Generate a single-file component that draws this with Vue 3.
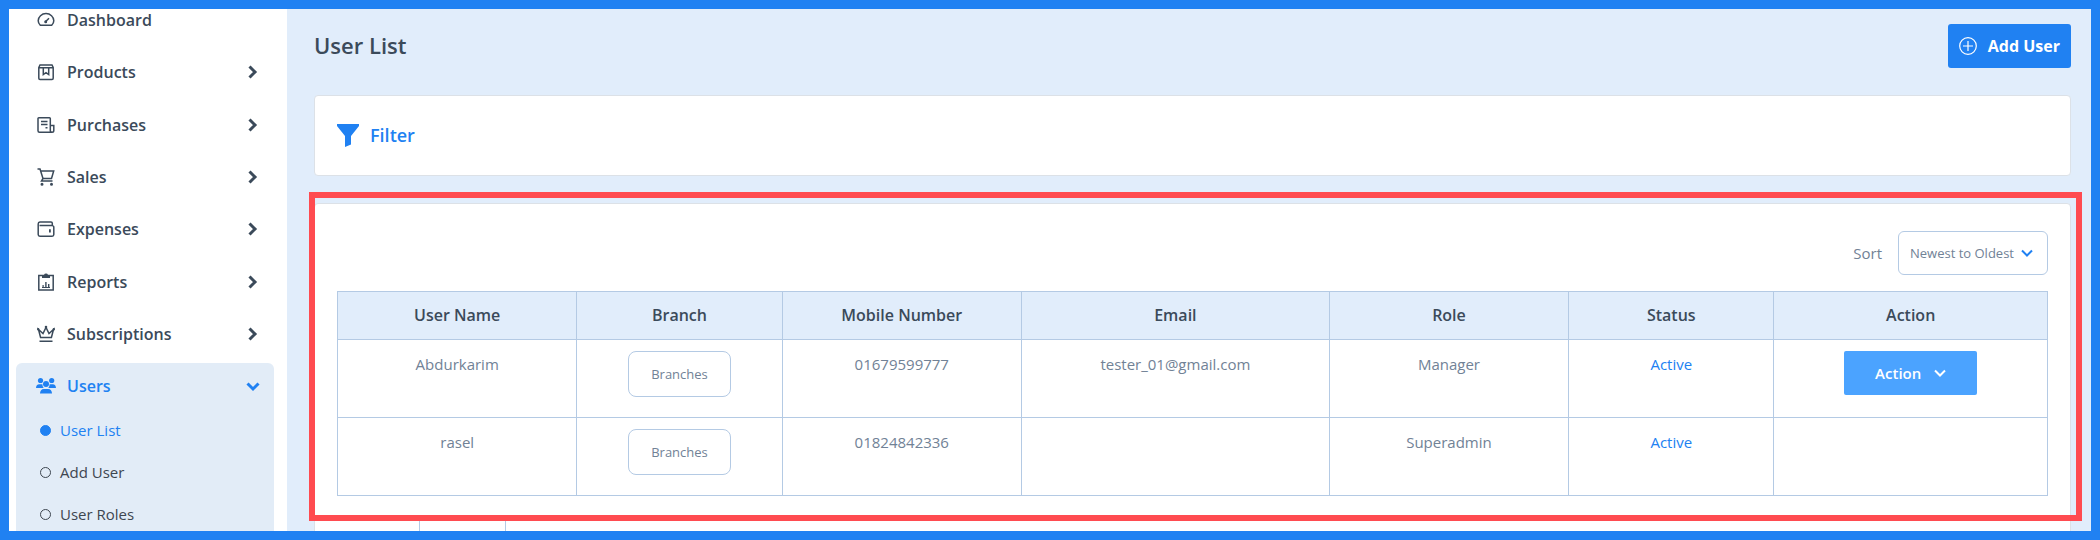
<template>
  <div class="app">
    <aside class="sidebar">
      <nav>
        <ul class="menu">
          <li v-for="item in menu" :key="item.label">
            <a href="#" class="menu-link">
              <svg class="menu-icon" viewBox="0 0 18 18">
                <path :d="item.icon" />
                <path v-if="item.solid" class="solid" :d="item.solid" />
              </svg>
              <span class="menu-label">{{ item.label }}</span>
              <svg v-if="item.children" class="chevron" viewBox="0 0 14 14">
                <path d="M4.5 1.5L10 7L4.5 12.5" />
              </svg>
            </a>
          </li>
        </ul>

        <div class="group">
          <a href="#" class="menu-link active" @click.prevent="usersOpen = !usersOpen">
            <svg class="users-icon" viewBox="0 0 20 18">
              <circle cx="4.5" cy="3.5" r="2.6" />
              <circle cx="15.7" cy="3.5" r="2.6" />
              <circle cx="10" cy="7" r="3" />
              <path d="M0 11c0-2.4 1.3-3.8 3.2-3.8h2.3c.4 0 .7.1 1 .3-.1 1.3.3 2.5 1.3 3.5z" />
              <path d="M20 11c0-2.4-1.3-3.8-3.2-3.8h-2.3c-.4 0-.7.1-1 .3.1 1.3-.3 2.5-1.3 3.5z" />
              <path d="M4 16.5c0-2.7 1.6-4.5 3.8-4.5h4.4c2.2 0 3.8 1.8 3.8 4.5z" />
            </svg>
            <span class="menu-label">Users</span>
            <svg class="chevron" viewBox="0 0 14 14">
              <path d="M1.5 4.5L7 10L12.5 4.5" />
            </svg>
          </a>
          <ul v-if="usersOpen" class="submenu">
            <li v-for="page in userPages" :key="page">
              <a href="#" class="sub-link" :class="{ current: page === currentPage }">
                <span class="dot"></span>{{ page }}
              </a>
            </li>
          </ul>
        </div>
      </nav>
    </aside>

    <main class="content">
      <header class="page-head">
        <h1>User List</h1>
        <button class="add-btn" type="button">
          <svg viewBox="0 0 18 18">
            <circle cx="9" cy="9" r="8.3" />
            <path d="M9 4v10M4 9h10" />
          </svg>
          Add User
        </button>
      </header>

      <section class="card filter">
        <a href="#" class="filter-link">
          <svg viewBox="0 0 22 23">
            <path d="M0 0H22V2L14 12V20.5L8 23V12L0 2Z" />
          </svg>
          Filter
        </a>
      </section>

      <section class="card list">
        <div class="highlighted">
          <div class="toolbar">
            <label for="sort">Sort</label>
            <div class="select-box">
              <select id="sort" v-model="sort">
                <option v-for="option in sortOptions" :key="option">{{ option }}</option>
              </select>
              <svg viewBox="0 0 12 12"><path d="M1 3.5L6 8.5L11 3.5" /></svg>
            </div>
          </div>

          <table>
            <colgroup>
              <col class="w14" /><col class="w12" /><col class="w14" /><col class="w18" />
              <col class="w14" /><col class="w12" /><col class="w16" />
            </colgroup>
            <thead>
              <tr>
                <th v-for="column in columns" :key="column">{{ column }}</th>
              </tr>
            </thead>
            <tbody>
              <tr v-for="user in users" :key="user.name">
                <td>{{ user.name }}</td>
                <td><button class="branch-btn" type="button">Branches</button></td>
                <td>{{ user.mobile }}</td>
                <td>{{ user.email }}</td>
                <td>{{ user.role }}</td>
                <td class="status">{{ user.status }}</td>
                <td>
                  <button v-if="user.editable" class="action-btn" type="button">
                    Action
                    <svg viewBox="0 0 12 12"><path d="M1 3.5L6 8.5L11 3.5" /></svg>
                  </button>
                </td>
              </tr>
            </tbody>
          </table>
        </div>
        <div class="pager"><span class="page"></span></div>
      </section>
    </main>
  </div>
</template>

<script setup>
import { ref } from "vue";

const usersOpen = ref(true);
const currentPage = ref("User List");
const userPages = ["User List", "Add User", "User Roles"];

const sortOptions = ["Newest to Oldest", "Oldest to Newest"];
const sort = ref("Newest to Oldest");

const menu = [
  {
    label: "Dashboard",
    icon: "M3.3 14.3C2 13 1.2 11.5 1.2 9.8a7.8 7.2 0 0 1 15.6 0c0 1.7-.8 3.2-2.1 4.5zM8.7 10.5L12 7.2",
    solid: "M7.2 10.8a1.5 1.5 0 1 1 3 0a1.5 1.5 0 1 1-3 0",
  },
  {
    label: "Products",
    icon: "M1.8 4.5L3 2h12l1.2 2.5V15.3a1.2 1.2 0 0 1-1.2 1.2H3A1.2 1.2 0 0 1 1.8 15.3zM1.8 4.7h14.4M6.3 5v6.5L9 9.7l2.7 1.8V5",
    children: true,
  },
  {
    label: "Purchases",
    icon: "M15 16.3H2.5A1.5 1.5 0 0 1 1 14.8V2.5A.8.8 0 0 1 1.8 1.7H12.5a.8.8 0 0 1 .8.8V14.5a1.7 1.7 0 0 0 3.5 0V9.5h-3.5M4 5.5h6.5M4 8.5h6.5M8.5 11.8h2",
    children: true,
  },
  {
    label: "Sales",
    icon: "M.5 1H3l3 9.5h8.5l2.2-7.5H3.7M6 10.5l-1.5 2.5H15.5",
    solid: "M3.5 16.2a1.5 1.5 0 1 1 3 0a1.5 1.5 0 1 1-3 0M13 16.2a1.5 1.5 0 1 1 3 0a1.5 1.5 0 1 1-3 0",
    children: true,
  },
  {
    label: "Expenses",
    icon: "M15.3 5.5V3.3A1.3 1.3 0 0 0 14 2H3A2 2 0 0 0 1.2 4V14.5A1.7 1.7 0 0 0 2.9 16.2H15.1A1.7 1.7 0 0 0 16.8 14.5V7.2A1.7 1.7 0 0 0 15.1 5.5H2.5",
    solid: "M12 9.3h1.8v3.2H12z",
    children: true,
  },
  {
    label: "Reports",
    icon: "M1.8 2.5H16.2V17H1.8z",
    solid: "M5 2h2a2.1 2.1 0 0 1 4 0h2v3H5zM5.5 12h1.2v2H5.5zM8.2 9h1.4v5H8.2zM11 11h1.4v3H11zM5 14h8v1H5z",
    children: true,
  },
  {
    label: "Subscriptions",
    icon: "M3.6 12.5L1.5 4.5L6 8.5L9 2.5L12 8.5L16.5 4.5L14.4 12.5zM2.5 16.3H15.5",
    solid: "M0 4.3a1.2 1.2 0 1 1 2.4 0a1.2 1.2 0 1 1-2.4 0M7.7 2a1.3 1.3 0 1 1 2.6 0a1.3 1.3 0 1 1-2.6 0M15.6 4.3a1.2 1.2 0 1 1 2.4 0a1.2 1.2 0 1 1-2.4 0",
    children: true,
  },
];

const columns = ["User Name", "Branch", "Mobile Number", "Email", "Role", "Status", "Action"];

const users = [
  {
    name: "Abdurkarim",
    mobile: "01679599777",
    email: "tester_01@gmail.com",
    role: "Manager",
    status: "Active",
    editable: true,
  },
  {
    name: "rasel",
    mobile: "01824842336",
    email: "",
    role: "Superadmin",
    status: "Active",
    editable: false,
  },
];
</script>

<style>
body {
  margin: 0;
}
</style>

<style scoped>
* {
  box-sizing: border-box;
}

.app {
  display: flex;
  height: 100vh;
  overflow: hidden;
  border: 9px solid #2081f2;
  background: #e1edfb;
  color: #3b4a5a;
  font-family: "Open Sans", "Noto Sans", sans-serif;
}

a {
  color: inherit;
  text-decoration: none;
}

ul {
  list-style: none;
  margin: 0;
  padding: 0;
}

button,
select {
  font-family: inherit;
  cursor: pointer;
}

svg {
  flex: none;
  fill: none;
  stroke: currentColor;
}

.sidebar {
  flex: none;
  width: 278px;
  background: #fff;
}

.menu {
  display: flex;
  flex-direction: column;
  justify-content: space-between;
  height: 336px;
  padding: 0 14px 0 7px;
}

.menu-link {
  display: flex;
  align-items: center;
  padding: 0 14px 0 21px;
  font-size: 16px;
  font-weight: 600;
  line-height: 22px;
}

.menu-icon {
  width: 18px;
  height: 18px;
  margin-right: 12px;
  stroke-width: 1.5;
}

.solid {
  fill: currentColor;
  stroke: none;
}

.menu-label {
  flex: 1;
}

.chevron {
  width: 14px;
  height: 14px;
  stroke-width: 3;
}

.group {
  margin: 18px 13px 0 7px;
  padding-top: 12px;
  height: 240px;
  border-radius: 6px;
  background: #e2ecf7;
}

.active {
  padding: 0 14px 0 20px;
  color: #2081f2;
}

.users-icon {
  width: 20px;
  height: 18px;
  margin-right: 11px;
  fill: currentColor;
  stroke: none;
}

.submenu {
  padding: 12px 0 0 24px;
}

.sub-link {
  display: flex;
  align-items: center;
  gap: 9px;
  font-size: 15px;
  line-height: 42px;
  color: #3d4650;
}

.dot {
  width: 11px;
  height: 11px;
  border: 1px solid currentColor;
  border-radius: 50%;
}

.current {
  color: #2081f2;
}

.current .dot {
  background: currentColor;
}

.content {
  flex: 1;
  min-width: 0;
  padding: 15px 20px 0 27px;
}

.page-head {
  display: flex;
  align-items: center;
  justify-content: space-between;
  margin-bottom: 27px;
}

h1 {
  margin: 0;
  padding-bottom: 2px;
  font-size: 22px;
  font-weight: 600;
  line-height: 32px;
}

.add-btn {
  display: flex;
  align-items: center;
  gap: 11px;
  height: 44px;
  padding: 0 11px;
  border: none;
  border-radius: 3px;
  background: #2081f2;
  color: #fff;
  font-size: 16px;
  font-weight: 700;
}

.add-btn svg {
  width: 18px;
  height: 18px;
  stroke-width: 1.2;
}

.card {
  border: 1px solid #dce1e7;
  border-radius: 4px;
  background: #fff;
}

.filter {
  padding: 23px 22px;
  margin-bottom: 27px;
}

.filter-link {
  display: inline-flex;
  align-items: center;
  gap: 11px;
  color: #2081f2;
  font-size: 18px;
  font-weight: 600;
  line-height: 32px;
}

.filter-link svg {
  width: 22px;
  height: 23px;
  fill: currentColor;
  stroke: none;
}

.list {
  padding-bottom: 60px;
}

.highlighted {
  position: relative;
  padding: 27px 22px 25px;
}

.highlighted::after {
  content: "";
  position: absolute;
  inset: -12px -12px 0 -6px;
  border: 6px solid #ff4b50;
  pointer-events: none;
}

.toolbar {
  display: flex;
  align-items: center;
  justify-content: flex-end;
  gap: 16px;
  margin-bottom: 16px;
  color: #718296;
  font-size: 15px;
}

.select-box {
  position: relative;
}

.select-box select {
  appearance: none;
  display: block;
  width: 150px;
  height: 44px;
  padding: 0 11px;
  border: 1px solid #b4cae4;
  border-radius: 6px;
  background: #fff;
  color: #718296;
  font-size: 13px;
}

.select-box svg {
  position: absolute;
  right: 15px;
  top: 16px;
  width: 12px;
  height: 12px;
  color: #2081f2;
  stroke-width: 2;
  pointer-events: none;
}

table {
  width: 100%;
  border-collapse: collapse;
  table-layout: fixed;
}

.w12 {
  width: 12%;
}

.w14 {
  width: 14%;
}

.w16 {
  width: 16%;
}

.w18 {
  width: 18%;
}

th,
td {
  border: 1px solid #b4cae4;
  text-align: center;
}

th {
  height: 48px;
  padding: 0;
  background: #e1edfb;
  font-size: 16px;
  font-weight: 600;
}

td {
  height: 78px;
  padding: 11px 4px 0;
  vertical-align: top;
  color: #718296;
  font-size: 15px;
  line-height: 26px;
}

.status {
  color: #2081f2;
}

.branch-btn {
  width: 103px;
  height: 46px;
  border: 1px solid #b4cae4;
  border-radius: 8px;
  background: #fff;
  color: #718296;
  font-size: 13px;
}

.action-btn {
  display: inline-flex;
  align-items: center;
  justify-content: center;
  gap: 13px;
  width: 133px;
  height: 44px;
  border: none;
  border-radius: 2px;
  background: #4ba3ff;
  color: #fff;
  font-size: 15px;
  font-weight: 600;
}

.action-btn svg {
  width: 12px;
  height: 12px;
  stroke-width: 2;
}

.pager {
  padding-left: 104px;
}

.page {
  display: block;
  width: 87px;
  height: 44px;
  border: 1px solid #b4cae4;
  border-top: none;
}
</style>
